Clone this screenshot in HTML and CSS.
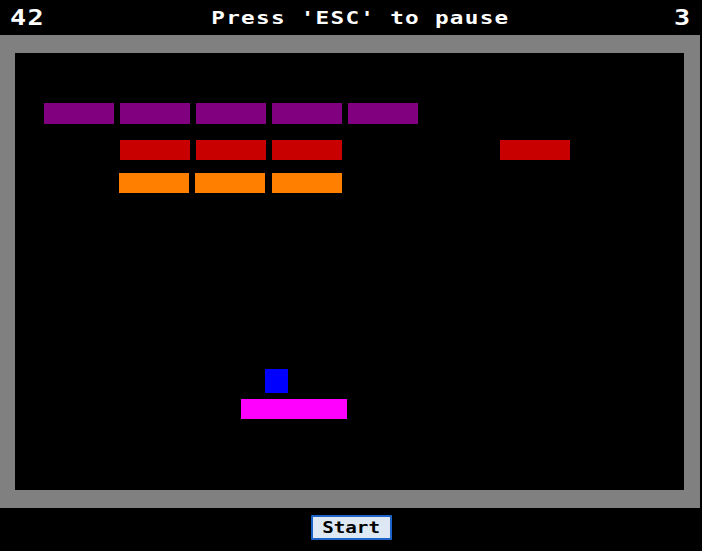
FILE: index.html
```html
<!DOCTYPE html>
<html>
<head>
<meta charset="utf-8">
<link rel="stylesheet" href="styles.css">
</head>
<body>
<div class="hud">
  <span class="score">42</span>
  <span class="msg">Press 'ESC' to pause</span>
  <span class="lives">3</span>
</div>
<div class="frame">
  <div class="field">
    <div class="brick purple" style="left:29px;top:50px"></div>
    <div class="brick purple" style="left:105px;top:50px"></div>
    <div class="brick purple" style="left:181px;top:50px"></div>
    <div class="brick purple" style="left:257px;top:50px"></div>
    <div class="brick purple" style="left:333px;top:50px"></div>
    <div class="brick red" style="left:105px;top:87px"></div>
    <div class="brick red" style="left:181px;top:87px"></div>
    <div class="brick red" style="left:257px;top:87px"></div>
    <div class="brick red" style="left:485px;top:87px"></div>
    <div class="brick orange" style="left:104px;top:120px"></div>
    <div class="brick orange" style="left:180px;top:120px"></div>
    <div class="brick orange" style="left:257px;top:120px"></div>
    <div class="ball"></div>
    <div class="paddle"></div>
  </div>
</div>
<div class="footer">
  <button class="start"><span class="start-label">Start</span></button>
</div>
</body>
</html>
```
FILE: styles.css
```css
html, body {
  margin: 0;
  padding: 0;
  background: #000;
  width: 702px;
  height: 551px;
  overflow: hidden;
}
.hud {
  height: 35px;
  display: flex;
  align-items: center;
  justify-content: space-between;
  padding: 0 12px 0 10px;
  color: #fff;
  font-family: "DejaVu Sans Mono", "Liberation Mono", monospace;
  font-weight: bold;
  box-sizing: border-box;
}
.hud span {
  display: inline-block;
  line-height: 1;
}
.score, .lives {
  font-size: 22px;
  letter-spacing: 1px;
}
.score {
  transform: scaleX(1.22);
  transform-origin: left center;
}
.lives {
  letter-spacing: 0;
  transform: scaleX(1.22);
  transform-origin: right center;
}
.msg {
  font-size: 18px;
  letter-spacing: 1px;
  transform: scaleX(1.26);
  transform-origin: center center;
  margin-left: 6px;
}
.frame {
  width: 700px;
  box-sizing: border-box;
  background: #808080;
  padding: 18px 16px 18px 15px;
}
.field {
  position: relative;
  height: 437px;
  background: #000;
}
.brick {
  position: absolute;
  width: 70px;
  height: 20px;
}
.purple { background: #800080; height: 21px; }
.red { background: #c80000; }
.orange { background: #ff8000; }
.ball {
  position: absolute;
  left: 250px;
  top: 316px;
  width: 23px;
  height: 24px;
  background: #0000ff;
}
.paddle {
  position: absolute;
  left: 226px;
  top: 346px;
  width: 106px;
  height: 20px;
  background: #ff00ff;
}
.footer {
  height: 43px;
  display: flex;
  justify-content: center;
  align-items: flex-start;
  padding-top: 7px;
  box-sizing: border-box;
}
.start {
  width: 81px;
  height: 25px;
  margin-left: 1px;
  background: #dde8f4;
  border: 2px solid #1e64c8;
  border-radius: 1px;
  font-family: "DejaVu Sans Mono", "Liberation Mono", monospace;
  font-weight: bold;
  font-size: 16px;
  color: #000;
  padding: 0;
  line-height: 1;
}
.start-label {
  display: inline-block;
  transform: scaleX(1.2);
}
```
